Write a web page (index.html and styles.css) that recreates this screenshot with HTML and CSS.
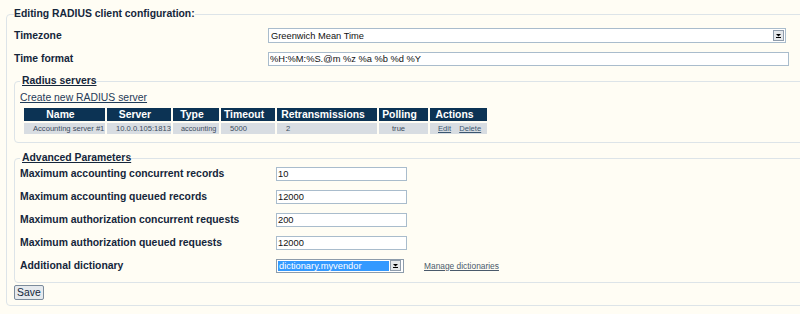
FILE: index.html
```html
<!DOCTYPE html>
<html lang="en">
  <head>
    <meta charset="UTF-8" />
    <meta name="viewport" content="width=device-width, initial-scale=1.0" />
    <title>Editing RADIUS client configuration</title>

    <link rel="stylesheet" href="styles.css">
  </head>
  <body>
    <form class="radius-form" method="POST">
      <fieldset class="box">
        <legend>Editing RADIUS client configuration:</legend>

        <div class="row">
          <label for="timezone">Timezone</label>
          <span class="select timezone">
            <select id="timezone" name="timezone">
              <option>Greenwich Mean Time</option>
            </select>
            <svg class="arrow" width="11" height="11" viewBox="0 0 11 11">
              <rect x="0.5" y="0.5" width="10" height="10" fill="#e4e7ea" stroke="#8f9cab" />
              <polygon points="3,4 8,4 5.5,6.5" fill="#000" />
              <rect x="3" y="7" width="5" height="1" fill="#000" />
            </svg>
          </span>
        </div>

        <div class="row">
          <label for="timeformat">Time format</label>
          <input class="text timeformat" type="text" id="timeformat" name="timeformat" value="%H:%M:%S.@m %z %a %b %d %Y" />
        </div>

        <fieldset class="box sub servers-box">
          <legend>Radius servers</legend>
          <a class="create-link" href="#">Create new RADIUS server</a>
          <table class="servers">
            <colgroup>
              <col style="width: 81px" />
              <col style="width: 64px" />
              <col style="width: 46px" />
              <col style="width: 54px" />
              <col style="width: 100px" />
              <col style="width: 49px" />
              <col style="width: 57px" />
            </colgroup>
            <thead>
              <tr>
                <th>Name</th>
                <th>Server</th>
                <th>Type</th>
                <th>Timeout</th>
                <th>Retransmissions</th>
                <th>Polling</th>
                <th>Actions</th>
              </tr>
            </thead>
            <tbody>
              <tr>
                <td>Accounting server #1</td>
                <td>10.0.0.105:1813</td>
                <td class="type">accounting</td>
                <td>5000</td>
                <td>2</td>
                <td class="polling">true</td>
                <td class="actions"><a href="#">Edit</a> <a href="#">Delete</a></td>
              </tr>
            </tbody>
          </table>
        </fieldset>

        <fieldset class="box sub advanced-box">
          <legend>Advanced Parameters</legend>

          <div class="row">
            <label for="acct_concurrent">Maximum accounting concurrent records</label>
            <input class="text number" type="text" id="acct_concurrent" name="acct_concurrent" value="10" />
          </div>
          <div class="row">
            <label for="acct_queued">Maximum accounting queued records</label>
            <input class="text number" type="text" id="acct_queued" name="acct_queued" value="12000" />
          </div>
          <div class="row">
            <label for="auth_concurrent">Maximum authorization concurrent requests</label>
            <input class="text number" type="text" id="auth_concurrent" name="auth_concurrent" value="200" />
          </div>
          <div class="row">
            <label for="auth_queued">Maximum authorization queued requests</label>
            <input class="text number" type="text" id="auth_queued" name="auth_queued" value="12000" />
          </div>
          <div class="row last">
            <label for="dictionary">Additional dictionary</label>
            <span class="select dictionary is-focused">
              <select id="dictionary" name="dictionary">
                <option>dictionary.myvendor</option>
              </select>
              <svg class="arrow" width="11" height="11" viewBox="0 0 11 11">
                <rect x="0.5" y="0.5" width="10" height="10" fill="#e4e7ea" stroke="#8f9cab" />
                <polygon points="3,4 8,4 5.5,6.5" fill="#000" />
                <rect x="3" y="7" width="5" height="1" fill="#000" />
              </svg>
            </span>
            <a class="manage-link" href="#">Manage dictionaries</a>
          </div>
        </fieldset>

        <button class="save" type="submit">Save</button>
      </fieldset>
    </form>
  </body>
</html>
```

FILE: styles.css
```css
html {
  box-sizing: border-box;
  font-family: "Liberation Sans", Arial, sans-serif;
  font-size: 10.4px;
}

*,
*:before,
*:after {
  box-sizing: inherit;
}

body {
  margin: 0;
  padding: 0;
  overflow: hidden;
  background-color: #fffdf4;
  color: #15263b;
}

/* **********Formulario RADIUS********** */
.radius-form {
  padding: 8px 0 0 6px;
}

.box {
  margin: 0;
  padding: 4px 0 5px 7px;
  border: 1px solid #dde4e8;
  border-radius: 4px;
  width: 1000px;
  min-width: 0;
}

.box > legend {
  padding: 0;
  font-weight: bold;
  line-height: 12px;
}

.sub {
  width: auto;
  padding: 4px 0 6px 5px;
  margin-top: 5px;
}

.sub > legend {
  padding: 0 0 0 2px;
  text-decoration: underline;
}

.advanced-box {
  margin-top: 9px;
  padding-top: 0;
  padding-bottom: 5px;
}

.advanced-box > legend {
  margin-bottom: -2px;
}

.row {
  display: flex;
  align-items: center;
  height: 23px;
}

.row label {
  flex: none;
  width: 254px;
  font-weight: bold;
}

.sub .row label {
  width: 256px;
}

.text {
  height: 14px;
  padding: 0 1px;
  border: 1px solid #a9bccc;
  background-color: #fff;
  color: #111;
  font-family: "Liberation Sans", Arial, sans-serif;
  font-size: 9.3px;
}

.timeformat {
  width: 521px;
}

.number {
  width: 131px;
}

.select {
  display: inline-flex;
  align-items: center;
  height: 15px;
  border: 1px solid #a9bccc;
  background-color: #fff;
}

.select select {
  flex: 1;
  height: 100%;
  margin: 0;
  padding: 0 0 0 2px;
  border: none;
  outline: none;
  appearance: none;
  -webkit-appearance: none;
  background: transparent;
  color: #111;
  font-family: "Liberation Sans", Arial, sans-serif;
  font-size: 9.3px;
}

.select .arrow {
  flex: none;
  display: block;
  margin-right: 1px;
}

.timezone {
  width: 518px;
}

.dictionary {
  width: 128px;
  height: 14px;
  padding: 1px;
  border-color: #8d9cab;
}

.dictionary.is-focused select {
  background-color: #3399ff;
  color: #fff;
  padding-left: 1px;
  margin-right: 1px;
}

.manage-link {
  margin-left: 20px;
  color: #4a5a6b;
  font-size: 8.4px;
}

.create-link {
  display: block;
  margin-top: 1px;
  line-height: 12px;
  color: #1f3b58;
}

.servers {
  margin: 2px 0 0 2px;
  border-spacing: 2px;
  table-layout: fixed;
  width: 467px;
}

.servers th {
  height: 13px;
  padding: 0 8px 0 0;
  background-color: #0c3354;
  color: #fff;
  font-weight: bold;
  line-height: 13px;
  text-align: center;
  white-space: nowrap;
}

.servers td {
  height: 11px;
  padding: 0 0 0 9px;
  background-color: #d8dde2;
  color: #3b4b5c;
  font-size: 7.6px;
  line-height: 11px;
  white-space: nowrap;
  overflow: hidden;
}

.servers td.type {
  padding-left: 8px;
  font-size: 7.3px;
}

.servers td.polling {
  padding-left: 13px;
}

.servers td.actions {
  padding-left: 8px;
}

.servers td a {
  color: #3a5670;
}

.servers td a + a {
  margin-left: 6px;
}

.save {
  display: block;
  margin: 2px 0 0 0;
  padding: 0 2px;
  height: 15px;
  border: 1px solid #7b8b9b;
  border-radius: 2px;
  background-color: #e6eaee;
  color: #15263b;
  font-family: "Liberation Sans", Arial, sans-serif;
  font-size: 10.4px;
  line-height: 13px;
}
```
